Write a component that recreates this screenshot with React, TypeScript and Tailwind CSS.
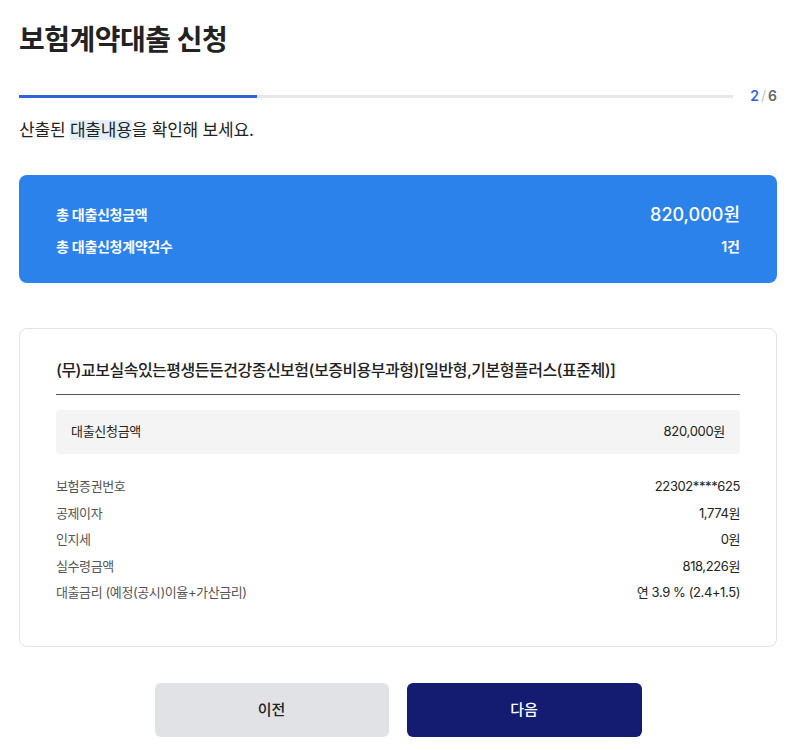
const font = "font-['Inter','Noto_Sans_CJK_KR',sans-serif]";

const details = [
  { label: '보험증권번호', value: '22302****625' },
  { label: '공제이자', value: '1,774원' },
  { label: '인지세', value: '0원' },
  { label: '실수령금액', value: '818,226원' },
  { label: '대출금리 (예정(공시)이율+가산금리)', value: '연 3.9 % (2.4+1.5)' },
];

export default function App() {
  const step = 2;
  const total = 6;

  return (
    <div className={`${font} w-[796px] min-h-[750px] bg-white px-[19px] text-[#222]`}>
      {/* Header */}
      <h1 className="pt-[22px] text-[28px] font-bold leading-[36px] tracking-[-0.5px] text-[#222]">
        보험계약대출 신청
      </h1>

      {/* Progress */}
      <div className="mt-[28px] flex items-center">
        <div className="h-[3px] flex-1 bg-[#e6e7eb]">
          <div className="h-full w-[33.4%] bg-[#2f64d8]" />
        </div>
        <div className="ml-[16px] w-[28px] text-right text-[14px] font-semibold leading-[20px]">
          <span className="text-[#2f64d8]">{step}</span>
          <span className="mx-[2px] font-normal text-[#c3c6cc]">/</span>
          <span className="text-[#666]">{total}</span>
        </div>
      </div>

      <p className="mt-[12px] text-[17px] leading-[24px] tracking-[-0.2px] text-[#222]">
        산출된 <span className="bg-[#e4effc]">대출내용</span>을 확인해 보세요.
      </p>

      {/* Summary */}
      <div className="mt-[33px] flex h-[108px] flex-col justify-center gap-[8px] rounded-[8px] bg-[#2b82ea] px-[37px] text-white">
        <div className="flex items-center justify-between">
          <span className="text-[14px] font-semibold tracking-[-0.3px]">총 대출신청금액</span>
          <span className="text-[18px] font-medium">820,000원</span>
        </div>
        <div className="flex items-center justify-between">
          <span className="text-[14px] font-semibold tracking-[-0.3px]">총 대출신청계약건수</span>
          <span className="text-[14px] font-semibold">1건</span>
        </div>
      </div>

      {/* Contract card */}
      <div className="mt-[45px] h-[319px] rounded-[8px] border border-[#e3e3e3] px-[36px] pt-[29px]">
        <h2 className="pb-[12px] text-[16px] font-medium leading-[24px] tracking-[-0.5px] text-[#222]">
          (무)교보실속있는평생든든건강종신보험(보증비용부과형)[일반형,기본형플러스(표준체)]
        </h2>
        <div className="h-px bg-[#555]" />

        <div className="mt-[15px] flex h-[44px] items-center justify-between rounded-[4px] bg-[#f4f4f4] px-[15px] text-[13px] tracking-[-0.3px] text-[#222]">
          <span>대출신청금액</span>
          <span>820,000원</span>
        </div>

        <dl className="mt-[22px] flex flex-col gap-[6px] text-[13px] leading-[20.6px] tracking-[-0.4px]">
          {details.map((d) => (
            <div key={d.label} className="flex items-center justify-between">
              <dt className="text-[#555]">{d.label}</dt>
              <dd className="text-[#222]">{d.value}</dd>
            </div>
          ))}
        </dl>
      </div>

      {/* Actions */}
      <div className="mt-[36px] flex justify-center gap-[18px] pb-[13px]">
        <button className="h-[54px] w-[234px] rounded-[6px] bg-[#e1e2e6] text-[15px] font-medium text-[#222]">
          이전
        </button>
        <button className="h-[54px] w-[235px] rounded-[6px] bg-[#131c71] text-[15px] font-medium text-white">
          다음
        </button>
      </div>
    </div>
  );
}
